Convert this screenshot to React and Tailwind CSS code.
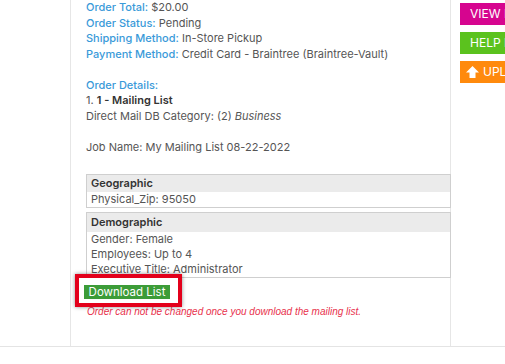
import React from "react";

const Field = ({ label, value }) => (
  <div>
    <span className="font-medium text-[#3a9ad9]">{label}</span> {value}
  </div>
);

const InfoBox = ({ title, rows, headerH }) => (
  <div className="border border-[#cfcfcf]">
    <div className={`${headerH} flex items-center bg-[#ebebeb] px-[4px] font-semibold text-[#333]`}>
      {title}
    </div>
    {rows.map((row, i) => (
      <div key={i} className="px-[4px] leading-[15px]">
        {row}
      </div>
    ))}
  </div>
);

const SideButton = ({ color, pad, children }) => (
  <div
    className={`flex h-[22px] w-[90px] items-center gap-[4px] whitespace-nowrap text-[12px] text-white ${pad} ${color}`}
  >
    {children}
  </div>
);

export default function App() {
  return (
    <div
      className="h-[364px] w-[505px] overflow-hidden bg-white text-[11px] text-[#555]"
      style={{ fontFamily: "Inter, 'Noto Sans', sans-serif" }}
    >
      <div className="flex h-[347px] border-b border-[#e4e4e4]">
        <div className="w-[70px] shrink-0" />
        <div className="w-[381px] shrink-0 border-x border-[#e6e6e6] pl-[15px] leading-[15.5px]">
          <div>
            <Field label="Order Total:" value="$20.00" />
            <Field label="Order Status:" value="Pending" />
            <Field label="Shipping Method:" value="In-Store Pickup" />
            <Field
              label="Payment Method:"
              value="Credit Card - Braintree (Braintree-Vault)"
            />
          </div>

          <div className="mt-[15.5px]">
            <div className="font-medium text-[#3a9ad9]">Order Details:</div>
            <div>
              1. <span className="font-semibold text-[#333]">1 - Mailing List</span>
            </div>
            <div>
              Direct Mail DB Category: (2) <em>Business</em>
            </div>
            <div className="mt-[15.5px]">Job Name: My Mailing List 08-22-2022</div>
          </div>

          <div className="-mr-[1px] mt-[19px] flex flex-col gap-[4px]">
            <InfoBox title="Geographic" headerH="h-[17px]" rows={["Physical_Zip: 95050"]} />
            <div className="h-[66px] overflow-hidden border-b border-[#cfcfcf]">
              <InfoBox
                title="Demographic"
                headerH="h-[19px]"
                rows={[
                  "Gender: Female",
                  "Employees: Up to 4",
                  "Executive Title: Administrator",
                ]}
              />
            </div>
          </div>

          <div className="relative z-10 -ml-[11px] -mt-[4px] w-fit border-4 border-[#e3001b] bg-white pb-[4px] pl-[5px] pr-[8px] pt-[7px] shadow-[0_0_4px_rgba(0,0,0,0.45)]">
            <div className="w-[86px] bg-[#3c9c38] text-center text-[11.5px] leading-[14px] text-white">
              Download List
            </div>
          </div>

          <div
            className="-mt-[1px] pl-[1px] text-[10px] italic leading-[12px] text-[#e8324d]"
            style={{ fontFamily: "'Liberation Sans', Arial, sans-serif" }}
          >
            Order can not be changed once you download the mailing list.
          </div>
        </div>
        <div className="flex flex-col gap-[7px] pl-[9px] pt-[3px]">
          <SideButton color="bg-[#d6058f]" pad="pl-[10px]">VIEW INVOICE</SideButton>
          <SideButton color="bg-[#5bc21e]" pad="pl-[10px]">HELP DESK</SideButton>
          <SideButton color="bg-[#ff8a0d]" pad="pl-[6px]">
            <svg width="13" height="12" viewBox="0 0 13 12" fill="white">
              <path d="M6.5 0 L13 6.5 H9.5 V12 H3.5 V6.5 H0 Z" />
            </svg>
            UPLOAD
          </SideButton>
        </div>
      </div>
    </div>
  );
}
